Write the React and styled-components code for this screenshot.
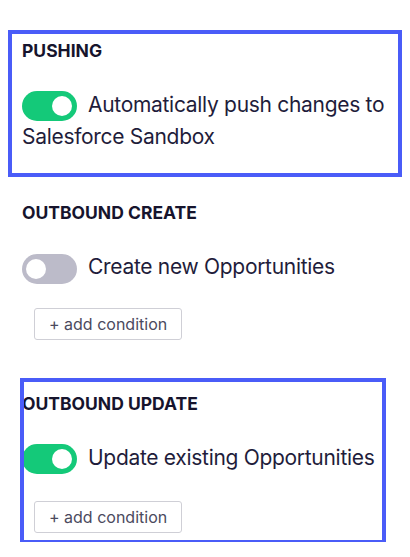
import React, { useState } from 'react';
import styled, { createGlobalStyle, css } from 'styled-components';

const GlobalStyle = createGlobalStyle`
  html, body {
    margin: 0;
    padding: 0;
    background: #ffffff;
  }
  body {
    font-family: Inter, "Noto Sans", "Liberation Sans", sans-serif;
    color: #1f1d3b;
  }
`

const Page = styled.div`
  padding-top: 32px;
  width: 410px;
`

// blue outline marks a highlighted section; it is drawn over the content
const Section = styled.section`
  margin: ${p => p.$margin};
  padding: ${p => p.$padding};
  width: ${p => p.$width || 'auto'};
  box-sizing: border-box;
  ${p => p.$highlight && css`
    outline: 4px solid #4a5cf8;
    outline-offset: -2px;
  `}
`

const Heading = styled.h4`
  margin: 0;
  font-size: 17.5px;
  line-height: 20px;
  font-weight: 700;
  color: #16142d;
  text-transform: uppercase;
`

const ToggleLine = styled.p`
  margin: 28px 0 0 0;
  font-size: 21px;
  line-height: 31px;
  font-weight: 400;
  letter-spacing: -0.3px;
  color: #1f1d3b;
`

const Track = styled.button`
  display: inline-flex;
  align-items: center;
  justify-content: ${p => (p.$on ? 'flex-end' : 'flex-start')};
  width: 55px;
  height: 30px;
  padding: 0 5px 0 4px;
  margin: 0 11px 0 0;
  border: none;
  border-radius: 15px;
  background: ${p => (p.$on ? '#14c979' : '#bcbbc9')};
  vertical-align: middle;
  box-sizing: border-box;
  cursor: pointer;
`

const Knob = styled.span`
  width: 20px;
  height: 20px;
  border-radius: 50%;
  background: #ffffff;
`

const AddButton = styled.button`
  display: block;
  margin: ${p => p.$top || 24}px 0 0 12px;
  height: 32px;
  padding: 0 14px;
  border: 1px solid #cfcfd6;
  border-radius: 3px;
  background: #ffffff;
  font-family: inherit;
  font-size: 16px;
  color: #4b4a5e;
  cursor: pointer;
`

function Toggle({ on, onChange }) {
    return (
        <Track $on={on} onClick={() => onChange(!on)} aria-pressed={on}>
            <Knob />
        </Track>
    )
}

export default function App() {
    const [push, setPush] = useState(true)
    const [create, setCreate] = useState(false)
    const [update, setUpdate] = useState(true)

    return (
        <>
            <GlobalStyle />
            <Page>
                <Section $highlight $margin="0 10px" $padding="9px 12px 23px">
                    <Heading>Pushing</Heading>
                    <ToggleLine>
                        <Toggle on={push} onChange={setPush} />
                        Automatically push changes to Salesforce Sandbox
                    </ToggleLine>
                </Section>

                <Section $margin="28px 0 0 0" $padding="0 22px">
                    <Heading>Outbound Create</Heading>
                    <ToggleLine>
                        <Toggle on={create} onChange={setCreate} />
                        Create new Opportunities
                    </ToggleLine>
                    <AddButton>+ add condition</AddButton>
                </Section>

                <Section $highlight $margin="40px 0 0 22px" $padding="14px 0 9px" $width="362px">
                    <Heading>Outbound Update</Heading>
                    <ToggleLine>
                        <Toggle on={update} onChange={setUpdate} />
                        Update existing Opportunities
                    </ToggleLine>
                    <AddButton $top={27}>+ add condition</AddButton>
                </Section>
            </Page>
        </>
    )
}
